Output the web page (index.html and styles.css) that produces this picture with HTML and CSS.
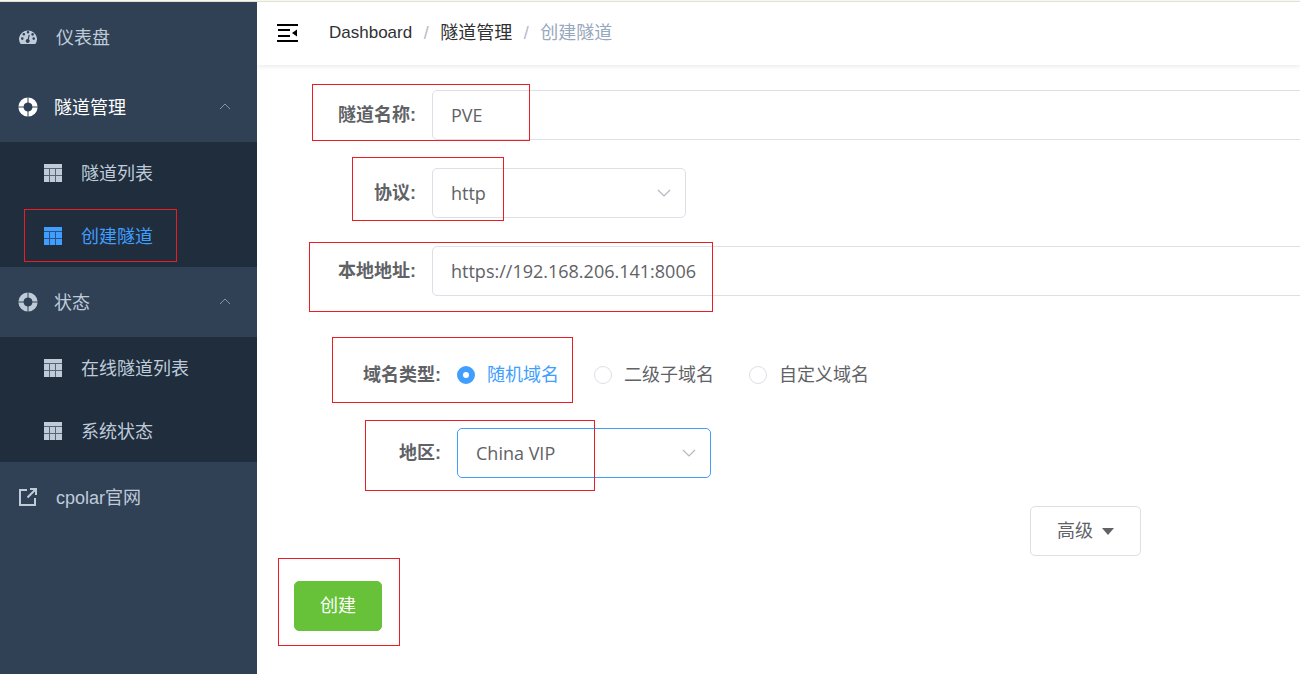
FILE: index.html
```html
<!DOCTYPE html>
<html lang="zh-CN">
<head>
<meta charset="utf-8">
<title>创建隧道</title>
<link rel="stylesheet" href="styles.css">
</head>
<body>
<svg class="sprite" aria-hidden="true">
  <symbol id="i-table" viewBox="0 0 18 18"><path d="M0 0h18v4H0zM0 5h5v6H0zM6 5h5v6H6zM12 5h6v6h-6zM0 12h5v6H0zM6 12h5v6H6zM12 12h6v6h-6z"/><path d="M0 4h18v14H0z" opacity=".35"/></symbol>
  <symbol id="i-ring" viewBox="0 0 20 20"><path d="M9.500.4v5.200A4.400 4.400 0 0 0 5.600 9.500H.4A9.600 9.600 0 0 1 9.500.4zM10.500.4v5.200a4.400 4.400 0 0 1 3.900 3.900h5.200A9.600 9.600 0 0 0 10.500.4zM.4 10.500h5.200a4.400 4.400 0 0 0 3.900 3.900v5.200A9.600 9.600 0 0 1 .4 10.500zM19.600 10.500h-5.200a4.400 4.400 0 0 1-3.900 3.900v5.200a9.600 9.600 0 0 0 9.100-9.100z"/></symbol>
  <symbol id="i-up" viewBox="0 0 12 8"><path d="M1 7l5-5 5 5" fill="none" stroke="currentColor"/></symbol>
  <symbol id="i-down" viewBox="0 0 14 8"><path d="M1 1l6 6 6-6" fill="none" stroke="currentColor" stroke-width="1.2"/></symbol>
</svg>
<div class="app">
  <nav class="sidebar" aria-label="主菜单">
    <a class="item" href="#">
      <svg class="icon" viewBox="0 0 18 18"><path fill-rule="evenodd" d="M1.700 16A9 8.500 0 1 1 16.300 16zM2 10.600a1.300 1.300 0 1 0 2.600 0a1.300 1.300 0 1 0-2.600 0M3.500 6.200a1.300 1.300 0 1 0 2.600 0a1.300 1.300 0 1 0-2.600 0M7.700 4.200a1.300 1.300 0 1 0 2.600 0a1.300 1.300 0 1 0-2.600 0M13.400 10.600a1.300 1.300 0 1 0 2.600 0a1.300 1.300 0 1 0-2.600 0M12.300 6.400a1.300 1.300 0 1 0 2.600 0a1.300 1.300 0 1 0-2.600 0M9.700 6.800l-1 4.200a2 2 0 1 0 1.100.3l1-4.300z"/></svg>
      <span>仪表盘</span>
    </a>
    <button class="item group open" type="button" aria-expanded="true">
      <svg class="icon ring"><use href="#i-ring"/></svg><span>隧道管理</span><svg class="arrow"><use href="#i-up"/></svg>
    </button>
    <div class="submenu">
      <a class="item sub" href="#"><svg class="icon"><use href="#i-table"/></svg><span>隧道列表</span></a>
      <a class="item sub active" href="#" aria-current="page"><svg class="icon"><use href="#i-table"/></svg><span>创建隧道</span></a>
    </div>
    <button class="item group" type="button" aria-expanded="true">
      <svg class="icon ring"><use href="#i-ring"/></svg><span>状态</span><svg class="arrow"><use href="#i-up"/></svg>
    </button>
    <div class="submenu">
      <a class="item sub" href="#"><svg class="icon"><use href="#i-table"/></svg><span>在线隧道列表</span></a>
      <a class="item sub" href="#"><svg class="icon"><use href="#i-table"/></svg><span>系统状态</span></a>
    </div>
    <a class="item" href="#">
      <svg class="icon line" viewBox="0 0 18 18"><path d="M8 2H1v15h15v-7M8.500 9.500L16 2M11 1h6v6"/></svg>
      <span>cpolar官网</span>
    </a>
  </nav>
  <main class="main">
    <header class="topbar">
      <button class="fold" type="button" aria-label="收起菜单"><svg viewBox="0 0 21 18"><path d="M0 0h21v2H0zM1 5h12v2H1zM1 11h12v2H1zM0 16h21v2H0zM20 5.500v7L15 9z"/></svg></button>
      <div class="crumbs">
        <a class="latin" href="#">Dashboard</a><i>/</i><a href="#">隧道管理</a><i>/</i><span>创建隧道</span>
      </div>
    </header>
    <form class="form">
      <div class="row"><label for="name">隧道名称:</label><input class="text" id="name" type="text" value="PVE"></div>
      <div class="row"><label for="proto">协议:</label><div class="pick"><select id="proto"><option>http</option></select><svg><use href="#i-down"/></svg></div></div>
      <div class="row"><label for="addr">本地地址:</label><input class="text" id="addr" type="text" value="https://192.168.206.141:8006"></div>
      <div class="nested">
        <div class="row" role="radiogroup" aria-labelledby="kind">
          <span class="label" id="kind">域名类型:</span>
          <div class="radios">
            <label><input type="radio" name="kind" checked><span>随机域名</span></label>
            <label><input type="radio" name="kind"><span>二级子域名</span></label>
            <label><input type="radio" name="kind"><span>自定义域名</span></label>
          </div>
        </div>
        <div class="row"><label for="area">地区:</label><div class="pick focus"><select id="area"><option>China VIP</option></select><svg><use href="#i-down"/></svg></div></div>
      </div>
      <button class="btn more" type="button">高级<svg viewBox="0 0 12 7"><path d="M0 0h12L6 7z"/></svg></button>
      <button class="btn create" type="button">创建</button>
    </form>
  </main>
  <div class="marks" aria-hidden="true">
    <b class="mark m-menu"></b><b class="mark m-name"></b><b class="mark m-proto"></b><b class="mark m-addr"></b><b class="mark m-kind"></b><b class="mark m-area"></b><b class="mark m-create"></b>
  </div>
</div>
</body>
</html>
```
FILE: styles.css
```css
* { box-sizing: border-box; }
body {
  margin: 0;
  background: #fff;
  color: #606266;
  font: 18px/26px "Liberation Sans", "Noto Sans CJK SC", sans-serif;
}
a { color: inherit; text-decoration: none; }
button, input, select { font: inherit; color: inherit; margin: 0; }
svg { display: block; fill: currentColor; flex: none; }
.sprite { position: absolute; width: 0; height: 0; }
.app {
  position: relative;
  display: flex;
  min-height: 100vh;
  border-top: 1px solid #f7f9ee;
  overflow: hidden;
}
.sidebar {
  flex: none;
  width: 257px;
  border-top: 1px solid #dfe3d6;
  background: #304156;
  color: #bfcbd9;
}
.item {
  display: flex;
  align-items: center;
  gap: 19px;
  width: 100%;
  height: 70px;
  padding: 0 26px 0 19px;
  border: 0;
  background: none;
  text-align: left;
}
.item span { padding-top: 2px; }
.icon { width: 18px; height: 18px; }
.ring { width: 20px; height: 20px; }
.group { gap: 16px; padding-left: 18px; }
.open { color: #fff; }
.line { fill: none; stroke: currentColor; stroke-width: 2; }
.arrow { width: 12px; height: 8px; margin-left: auto; margin-bottom: 3px; color: #8a939f; }
.submenu {
  display: grid;
  grid-auto-rows: 1fr;
  min-height: 125px;
  background: #1f2d3d;
}
.sub { height: auto; padding-left: 44px; }
.active { color: #409eff; }

.main { flex: 1; min-width: 0; overflow: hidden; }
.topbar {
  display: flex;
  align-items: center;
  gap: 31px;
  height: 64px;
  padding: 0 20px 2px;
  border-top: 1px solid #dfe3d6;
  box-shadow: 0 1px 5px rgba(0, 21, 41, 0.1);
}
.fold { padding: 0; border: 0; background: none; color: #000; }
.fold svg { width: 21px; height: 18px; }
.crumbs { display: flex; align-items: center; color: #97a8be; }
.crumbs a { color: #303133; }
.crumbs .latin { font-size: 17px; }
.crumbs i { width: 28px; text-align: center; font-style: normal; color: #b5bbc8; }

.form {
  display: flex;
  flex-direction: column;
  gap: 28px;
  margin: 25px -577px 0 37px;
}
.row { display: flex; align-items: center; height: 50px; }
.row > label, .label {
  flex: none;
  width: 138px;
  padding-right: 16px;
  text-align: right;
  font-weight: 700;
}
.nested { display: flex; flex-direction: column; gap: 28px; padding: 26px 0 0 25px; }
.text, .pick select {
  width: 100%;
  height: 50px;
  padding: 0 18px;
  border: 1px solid #dcdfe6;
  border-radius: 5px;
  background: #fff;
  font-family: "Open Sans", "Noto Sans CJK SC", sans-serif;
  outline: 0;
}
.text { flex: 1; }
.pick { display: grid; align-items: center; width: 254px; }
.pick select { grid-area: 1 / 1; appearance: none; }
.pick svg {
  grid-area: 1 / 1;
  justify-self: end;
  width: 14px;
  height: 8px;
  margin-right: 15px;
  color: #b4b8c0;
  pointer-events: none;
}
.focus select { border-color: #409eff; }
.radios { display: flex; gap: 35px; }
.radios label { display: flex; align-items: center; gap: 12px; }
.radios input {
  appearance: none;
  width: 18px;
  height: 18px;
  border: 1px solid #dcdfe6;
  border-radius: 50%;
  background: #fff;
}
.radios input:checked { border: 6px solid #409eff; }
.radios input:checked + span { color: #409eff; }
.btn {
  display: flex;
  align-items: center;
  justify-content: center;
  height: 50px;
  padding: 0 25px;
  border: 1px solid #dcdfe6;
  border-radius: 5px;
  background: #fff;
}
.more { align-self: center; gap: 9px; padding: 0 26px; }
.more svg { width: 12px; height: 7px; }
.create {
  align-self: flex-start;
  margin-top: -3px;
  border-color: #67c23a;
  background: #67c23a;
  color: #fff;
}

/* Callout frames drawn over the page */
.marks { position: absolute; inset: 0; pointer-events: none; }
.mark { position: absolute; border: 1px solid #ed1c24; }
.m-menu { left: 24px; top: 208px; width: 153px; height: 53px; }
.m-name { left: 312px; top: 83px; width: 218px; height: 57px; }
.m-proto { left: 352px; top: 156px; width: 152px; height: 64px; }
.m-addr { left: 309px; top: 241px; width: 404px; height: 70px; }
.m-kind { left: 332px; top: 336px; width: 241px; height: 66px; }
.m-area { left: 365px; top: 419px; width: 230px; height: 71px; }
.m-create { left: 278px; top: 557px; width: 122px; height: 88px; }
```
